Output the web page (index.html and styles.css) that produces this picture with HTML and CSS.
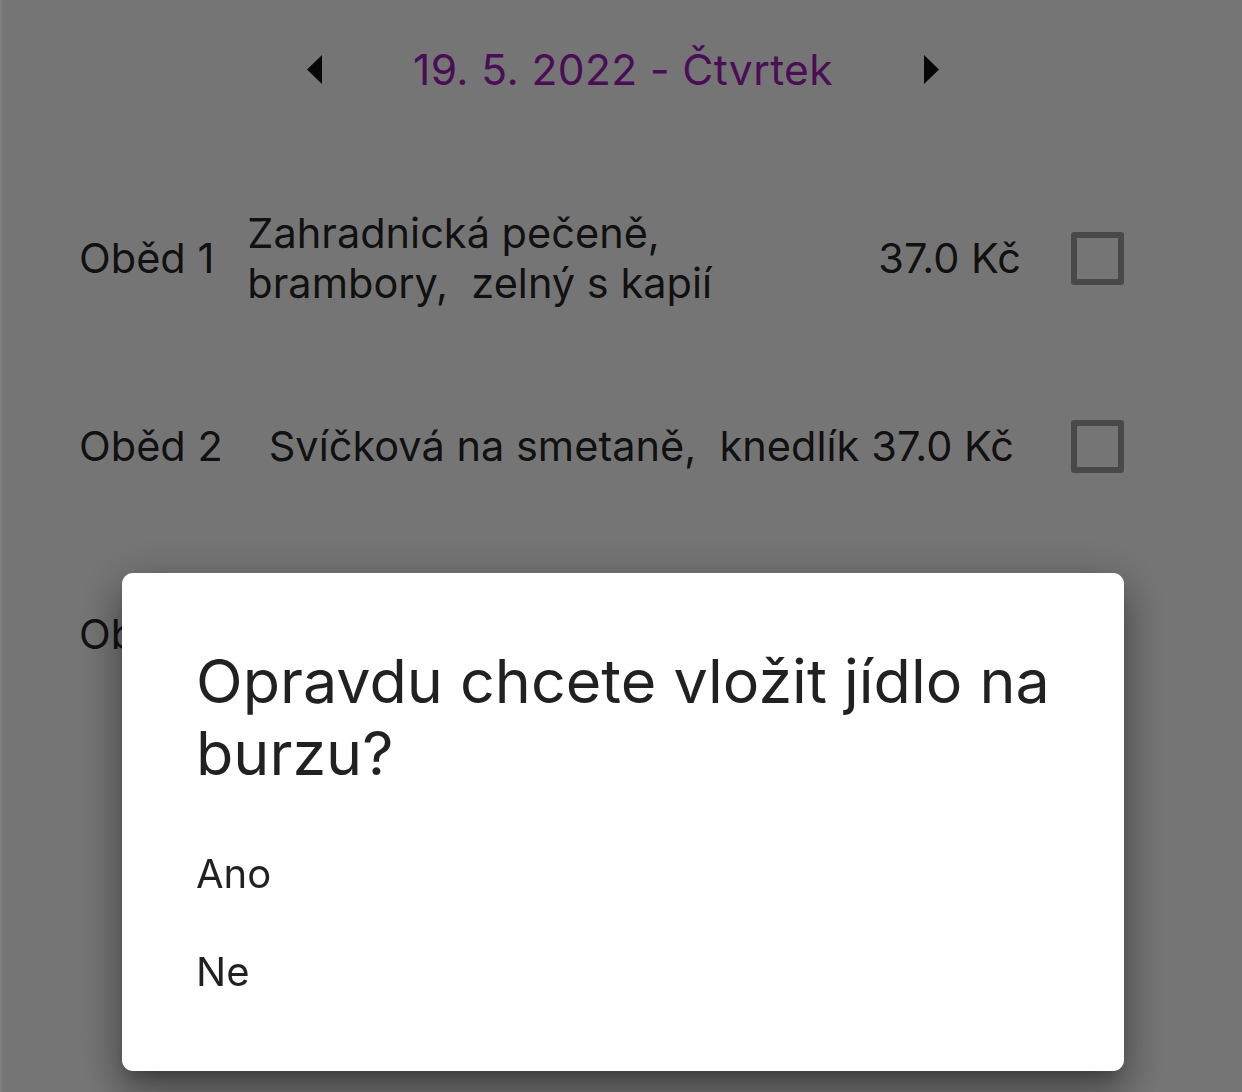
FILE: index.html
```html
<!DOCTYPE html>
<html lang="cs">
<head>
<meta charset="utf-8">
<title>Obědy</title>
<link rel="stylesheet" href="styles.css">
</head>
<body>
<div class="page">
  <header class="nav">
    <button class="arrow" aria-label="Předchozí den">
      <svg width="15" height="29" viewBox="0 0 15 29"><polygon points="15,0 0,14.5 15,29" fill="#111"/></svg>
    </button>
    <h1 class="date">19. 5. 2022 - Čtvrtek</h1>
    <button class="arrow" aria-label="Další den">
      <svg width="15" height="29" viewBox="0 0 15 29"><polygon points="0,0 15,14.5 0,29" fill="#111"/></svg>
    </button>
  </header>

  <main class="menu">
    <div class="row row-one">
      <span class="label">Oběd 1</span>
      <span class="desc desc-wrap">Zahradnická pečeně, brambory,&nbsp; zelný s kapií</span>
      <span class="price">37.0 Kč</span>
      <span class="check"></span>
    </div>
    <div class="row row-two">
      <span class="label">Oběd 2</span>
      <span class="desc">Svíčková na smetaně,&nbsp; knedlík</span>
      <span class="price">37.0 Kč</span>
      <span class="check"></span>
    </div>
    <div class="row row-three">
      <span class="label">Oběd 3</span>
    </div>
  </main>
</div>

<div class="scrim"></div>
<div class="edge"></div>

<div class="dialog" role="dialog">
  <h2 class="dialog-title">Opravdu chcete vložit jídlo na burzu?</h2>
  <div class="option">Ano</div>
  <div class="option">Ne</div>
</div>
</body>
</html>
```

FILE: styles.css
```css
* { box-sizing: border-box; }

html, body {
  margin: 0;
  padding: 0;
  width: 1242px;
  height: 1092px;
  overflow: hidden;
  background: #ffffff;
  font-family: "Inter", "Noto Sans", "Liberation Sans", sans-serif;
  color: rgba(0, 0, 0, 0.87);
}

.page {
  width: 1242px;
  height: 1092px;
}

.nav {
  height: 138px;
  display: flex;
  align-items: center;
  justify-content: center;
  gap: 91px;
  padding-left: 4px;
}

.arrow {
  border: 0;
  background: none;
  padding: 0;
  width: 15px;
  height: 29px;
  display: flex;
}

.date {
  margin: 0;
  font-size: 42.5px;
  font-weight: 400;
  color: #a020bc;
  letter-spacing: 0.4px;
}

.menu {
  padding-top: 26px;
}

.row {
  height: 188px;
  display: flex;
  align-items: center;
  padding: 0 118px 0 79px;
  font-size: 41.5px;
}

.label {
  flex: none;
  margin-right: 33px;
}

.desc {
  flex: 1 1 auto;
  line-height: 50px;
}

.desc-wrap {
  flex: none;
  width: 560px;
}

.price {
  flex: none;
  margin-left: auto;
  margin-right: 50px;
}

.row-two .label { margin-right: 46px; }
.row-two .price { margin-right: 57px; }

.check {
  flex: none;
  width: 53px;
  height: 53px;
  border: 6px solid #a0a0a0;
  border-radius: 3px;
}

.scrim {
  position: fixed;
  inset: 0;
  background: rgba(0, 0, 0, 0.54);
}

.edge {
  position: fixed;
  left: 0;
  top: 0;
  width: 2px;
  height: 1092px;
  background: #7e7e7e;
}

.dialog {
  position: fixed;
  left: 122px;
  top: 573px;
  width: 1002px;
  height: 498px;
  background: #ffffff;
  border-radius: 11px;
  padding: 72px 60px 0 74px;
  box-shadow:
    0 24px 38px 3px rgba(0, 0, 0, 0.24),
    0 9px 46px 8px rgba(0, 0, 0, 0.18),
    0 11px 15px -7px rgba(0, 0, 0, 0.25);
}

.dialog-title {
  margin: 0 0 36px 0;
  font-size: 61px;
  line-height: 72px;
  font-weight: 400;
  color: rgba(0, 0, 0, 0.87);
}

.option {
  font-size: 40px;
  line-height: 48px;
  padding: 25px 0;
  color: rgba(0, 0, 0, 0.87);
}
```
